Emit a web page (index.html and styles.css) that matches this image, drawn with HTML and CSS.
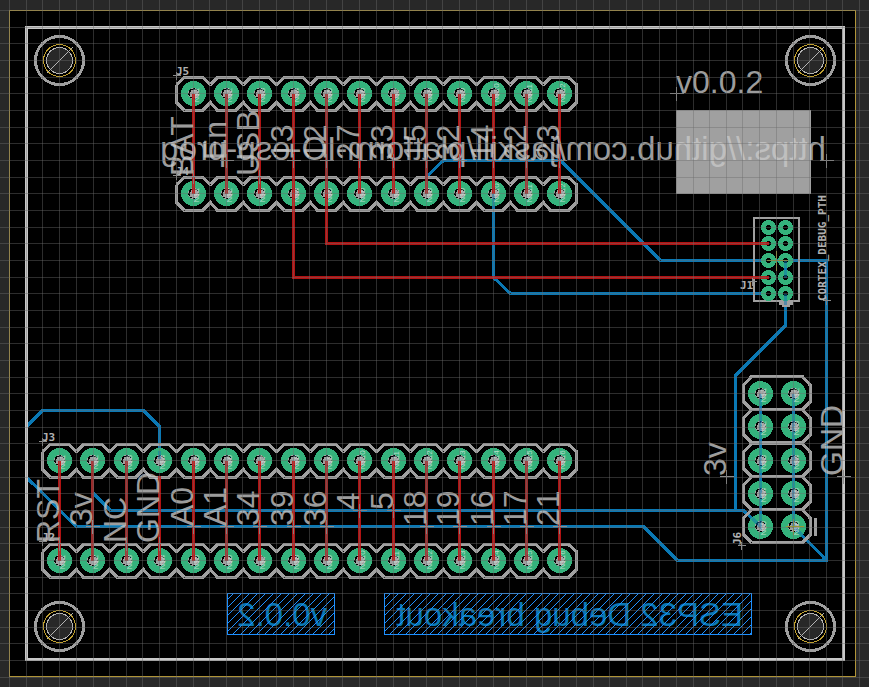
FILE: index.html
```html
<!DOCTYPE html>
<html lang="en">
<head>
<meta charset="utf-8">
<title>ESP32 Debug breakout</title>
<link rel="stylesheet" href="styles.css">
</head>
<body>
<main class="editor">
<svg class="canvas" viewBox="0 0 869 687" role="img" aria-label="ESP32 Debug breakout board layout">
  <defs>
    <g id="pad">
      <circle class="copper" r="9"/>
      <circle class="drill-ring" r="5"/>
      <path class="drill-mark" d="M-3-4H3V-3H4V3H3V4H-2V3H-4V-2H-3Z"/>
    </g>
    <circle id="small-pad" class="small-copper" r="5"/>
    <g id="hole">
      <circle class="hole-keepout" r="24"/>
      <circle class="hole-limit" r="16"/>
      <circle class="hole-drill" r="13"/>
      <path class="hole-slash" d="M-13 13L13-13"/>
    </g>
  </defs>
  <rect class="board" x="9" y="10" width="846" height="666"/>
  <g transform="translate(.5 .5)">
    <rect class="limit" x="9" y="10" width="846" height="666"/>
    <g class="bottom-copper">
      <path d="M426 176L443 160H560L660 260H826V560H677L643 526H76L26 477"/>
      <path d="M826 560L793 526V393"/>
      <path d="M493 193V277L510 293H768"/>
      <path d="M785 260V277"/>
      <path d="M785 293V325L735 375V510"/>
      <path d="M93 493L110 510H743L760 526V393H755"/>
      <path d="M26 426L42 410H143L159 426V460"/>
    </g>
    <rect class="outline" x="26" y="27" width="817" height="632"/>
    <use href="#hole" x="59" y="60"/>
    <use href="#hole" x="810" y="60"/>
    <use href="#hole" x="59" y="626"/>
    <use href="#hole" x="810" y="626"/>
    <g id="outlines" class="silk-line"></g>
    <rect class="silk-line thin" x="753" y="217" width="45" height="83"/>
    <path class="silk-line" d="M815 517V535"/>
    <path class="silk-bar" d="M778 301H792V304H789V306H781V304H778Z"/>
    <g id="pads"></g>
    <g class="bottom-copper over">
      <path d="M760 393V526L752 518"/>
      <path d="M793 393V526L802 535"/>
      <path d="M785 260V277M785 293V304M159 450V458M493 193V205"/>
    </g>
    <g id="marks"></g>
    <g id="traces"></g>
    <path class="top-copper" d="M326 193V243H768"/>
    <path class="top-copper" d="M293 193V277H768"/>
    <path class="origin" d="M766 260H787M776 250V270M785 526H803M793 518V534"/>
  </g>
  <rect class="logo" x="676" y="110" width="135" height="84"/>
  <g id="labels"></g>
  <text class="label" x="676" y="93">v0.0.2</text>
  <text class="label mirrored" transform="translate(826 160) scale(-1 1)">https://github.com/jaskill/platform-IO-esp-prog</text>
  <text class="part" transform="translate(826 301) rotate(-90)">CORTEX_DEBUG_PTH</text>
  <text class="part" x="176" y="75">J5</text>
  <text class="part" x="176" y="175">J4</text>
  <text class="part" x="42" y="441">J3</text>
  <text class="part" x="42" y="541">J2</text>
  <text class="part" x="740" y="289">J1</text>
  <text class="part" transform="translate(741 545) rotate(-90)">J6</text>
  <text class="copper-text mirrored" transform="translate(327 626) scale(-1 1)">v0.0.2</text>
  <text class="copper-text mirrored" transform="translate(743 626) scale(-1 1)">ESP32 Debug breakout</text>
  <g id="selections" class="selection" transform="translate(.5 .5)"></g>
  <g id="crosses" class="cross" transform="translate(.5 .5)"></g>
  <g id="grid" class="grid"></g>
</svg>
</main>
<script src="board.js"></script>
</body>
</html>
```
FILE: styles.css
```css
body {
  margin: 0;
  background: #282828;
}
.editor {
  height: 100vh;
  overflow: hidden;
}
.canvas {
  display: block;
  width: 100%;
  height: 100%;
  shape-rendering: crispEdges;
}
.board { fill: #000; }
.limit { fill: none; stroke: #b09438; stroke-width: 1px; }
.outline { fill: none; stroke: #c8c8c8; stroke-width: 3px; }
.bottom-copper { fill: none; stroke: #0a78b4; stroke-width: 3px; }
.bottom-copper.over { opacity: .5; }
.top-copper { fill: none; stroke: #c41414; stroke-width: 3px; opacity: .9; }
.top-copper.dim { stroke: #a83030; }
.silk-line { fill: none; stroke: #a0a0a0; stroke-width: 3px; }
.silk-line.thin { stroke-width: 2px; }
.silk-bar { fill: #a0a0a0; }
.copper { fill: #000; stroke: #34b27c; stroke-width: 7px; }
.small-copper { fill: #000; stroke: #34b27c; stroke-width: 5px; }
.drill-ring { fill: none; stroke: #a0a0a0; stroke-width: 1px; stroke-dasharray: 2 2; }
.drill-mark { fill: #a0a0a0; }
.hole-keepout { fill: #000; stroke: #a0a0a0; stroke-width: 3px; }
.hole-limit { fill: #000; stroke: #c0a030; stroke-width: 1px; }
.hole-drill { fill: #282828; stroke: #b4b4b4; stroke-width: 1px; }
.hole-slash { stroke: #b4b4b4; stroke-width: 1px; }
.origin { fill: none; stroke: #989830; stroke-width: 1px; }
.logo { fill: #a0a0a0; }
.label {
  font-family: "Liberation Sans", Arial, sans-serif;
  font-size: 32px;
  fill: #c8c8c8;
  fill-opacity: .8;
}
.part {
  font-family: "DejaVu Sans Mono", monospace;
  font-size: 11px;
  font-weight: bold;
  fill: #b0b0b0;
}
.net {
  font-family: "Liberation Sans", Arial, sans-serif;
  font-size: 8px;
  fill: #d8e8e0;
  fill-opacity: .8;
}
.copper-text {
  font-family: "Liberation Sans", Arial, sans-serif;
  font-size: 32px;
  fill: #0a78b4;
}
.mirrored { font-size: 33px; }
.selection { fill: none; stroke: #1e90ff; stroke-width: 1px; }
.cross { fill: none; stroke: #8c8c8c; stroke-width: 1px; }
.grid { fill: #6c6c6c; fill-opacity: .42; }
```
FILE: board.js
```js
const NS = 'http://www.w3.org/2000/svg';
const byId = (id) => document.getElementById(id);

function add(parent, tag, attrs, text) {
  const node = document.createElementNS(NS, tag);
  Object.entries(attrs).forEach(([key, value]) => node.setAttribute(key, value));
  if (text) node.textContent = text;
  parent.appendChild(node);
}

// Six grid steps make exactly one hundred units.
const stepsX = [9, 26, 42, 59, 76, 93];
const stepsY = [10, 27, 43, 60, 77, 93];
for (let base = 0; base < 900; base += 100) {
  stepsX.forEach((x) => add(byId('grid'), 'rect', { x: base + x, y: 0, width: 1, height: 687 }));
  stepsY.forEach((y) => add(byId('grid'), 'rect', { x: 0, y: base + y, width: 869, height: 1 }));
}

function addPad(x, y, net) {
  add(byId('pads'), 'use', { href: '#pad', x, y });
  add(byId('marks'), 'text', { class: 'net', transform: `translate(${x + 5} ${y + 9}) rotate(-90)` }, net);
}

function addHeader(pins, y) {
  const left = pins[0] - 17;
  const last = pins[pins.length - 1];
  let top = `M${left} ${y - 9}`;
  let bottom = `M${left} ${y - 9}V${y + 9}`;
  pins.forEach((x, i) => {
    const next = x === last ? x + 17 : Math.round((x + pins[i + 1]) / 2);
    top += `L${x - 9} ${y - 16}H${x + 9}L${next} ${y - 9}`;
    bottom += `L${x - 9} ${y + 17}H${x + 9}L${next} ${y + 9}`;
    addPad(x, y, `N$${i + 1}`);
  });
  add(byId('outlines'), 'path', { d: `${top}V${y + 9}` });
  add(byId('outlines'), 'path', { d: bottom });
}

const columns = [59, 92, 126, 159, 193, 226, 259, 293, 326, 359, 393, 426, 459, 493, 526, 559];
const upper = columns.slice(4);
addHeader(upper, 93);
addHeader(upper, 193);
addHeader(columns, 460);
addHeader(columns, 560);

function addTraces(pins, from, to) {
  pins.forEach((x) => {
    const tone = x % 100 === 26 || x === 92 ? 'top-copper dim' : 'top-copper';
    add(byId('traces'), 'path', { class: tone, d: `M${x} ${from}V${to}` });
  });
}
addTraces(upper, 93, 193);
addTraces(columns.filter((x) => x !== 159), 460, 560);
addTraces([159], 475, 560);

[393, 426, 460, 493, 526].forEach((y, i) => {
  add(byId('outlines'), 'path', {
    d: `M751 ${y - 17}H802L810 ${y - 8}V${y + 8}L802 ${y + 16}H751L743 ${y + 8}V${y - 8}Z`
  });
  addPad(760, y, `N$${i + 1}`);
  addPad(793, y, `N$${i + 2}`);
});
[227, 243, 260, 277, 293].forEach((y) => {
  add(byId('pads'), 'use', { href: '#small-pad', x: 768, y });
  add(byId('pads'), 'use', { href: '#small-pad', x: 785, y });
});

function addCross(x, y, size) {
  add(byId('crosses'), 'path', { d: `M${x - size} ${y}H${x + size}M${x} ${y - size}V${y + size}` });
}

function addLabel(text, x, y) {
  add(byId('labels'), 'text', { class: 'label', transform: `translate(${x} ${y}) rotate(-90)` }, text);
  addCross(x, y, 7);
}

const tall = { BAT: 176, USB: 176, RST: 543, NC: 543, GND: 543, 4: 510, 5: 510 };
['BAT', 'En', 'USB', '13', '12', '27', '33', '15', '32', '14', '22', '23']
  .forEach((text, i) => addLabel(text, upper[i], tall[text] || 160));
['RST', '3v', 'NC', 'GND', 'A0', 'A1', '34', '39', '36', '4', '5', '18', '19', '16', '17', '21']
  .forEach((text, i) => addLabel(text, columns[i], tall[text] || 526));
addLabel('3v', 726, 476);
addLabel('GND', 843, 476);

[[676, 93], [826, 160]].forEach(([x, y]) => addCross(x, y, 7));
[[176, 75], [176, 175], [42, 441], [42, 541], [752, 281], [741, 545], [826, 300]]
  .forEach(([x, y]) => addCross(x, y, 4));

// Diagonal hatching, each line cut off at the frame.
function addSelection(x, y, width, height) {
  add(byId('selections'), 'rect', { x, y, width, height });
  for (let s = 6; s < width + height; s += 8) {
    const startX = Math.min(s, width);
    const endX = Math.max(s - height, 0);
    add(byId('selections'), 'path', {
      d: `M${x + startX} ${y + s - startX}L${x + endX} ${y + s - endX}`
    });
  }
}
addSelection(227, 593, 107, 41);
addSelection(384, 593, 367, 41);
```
